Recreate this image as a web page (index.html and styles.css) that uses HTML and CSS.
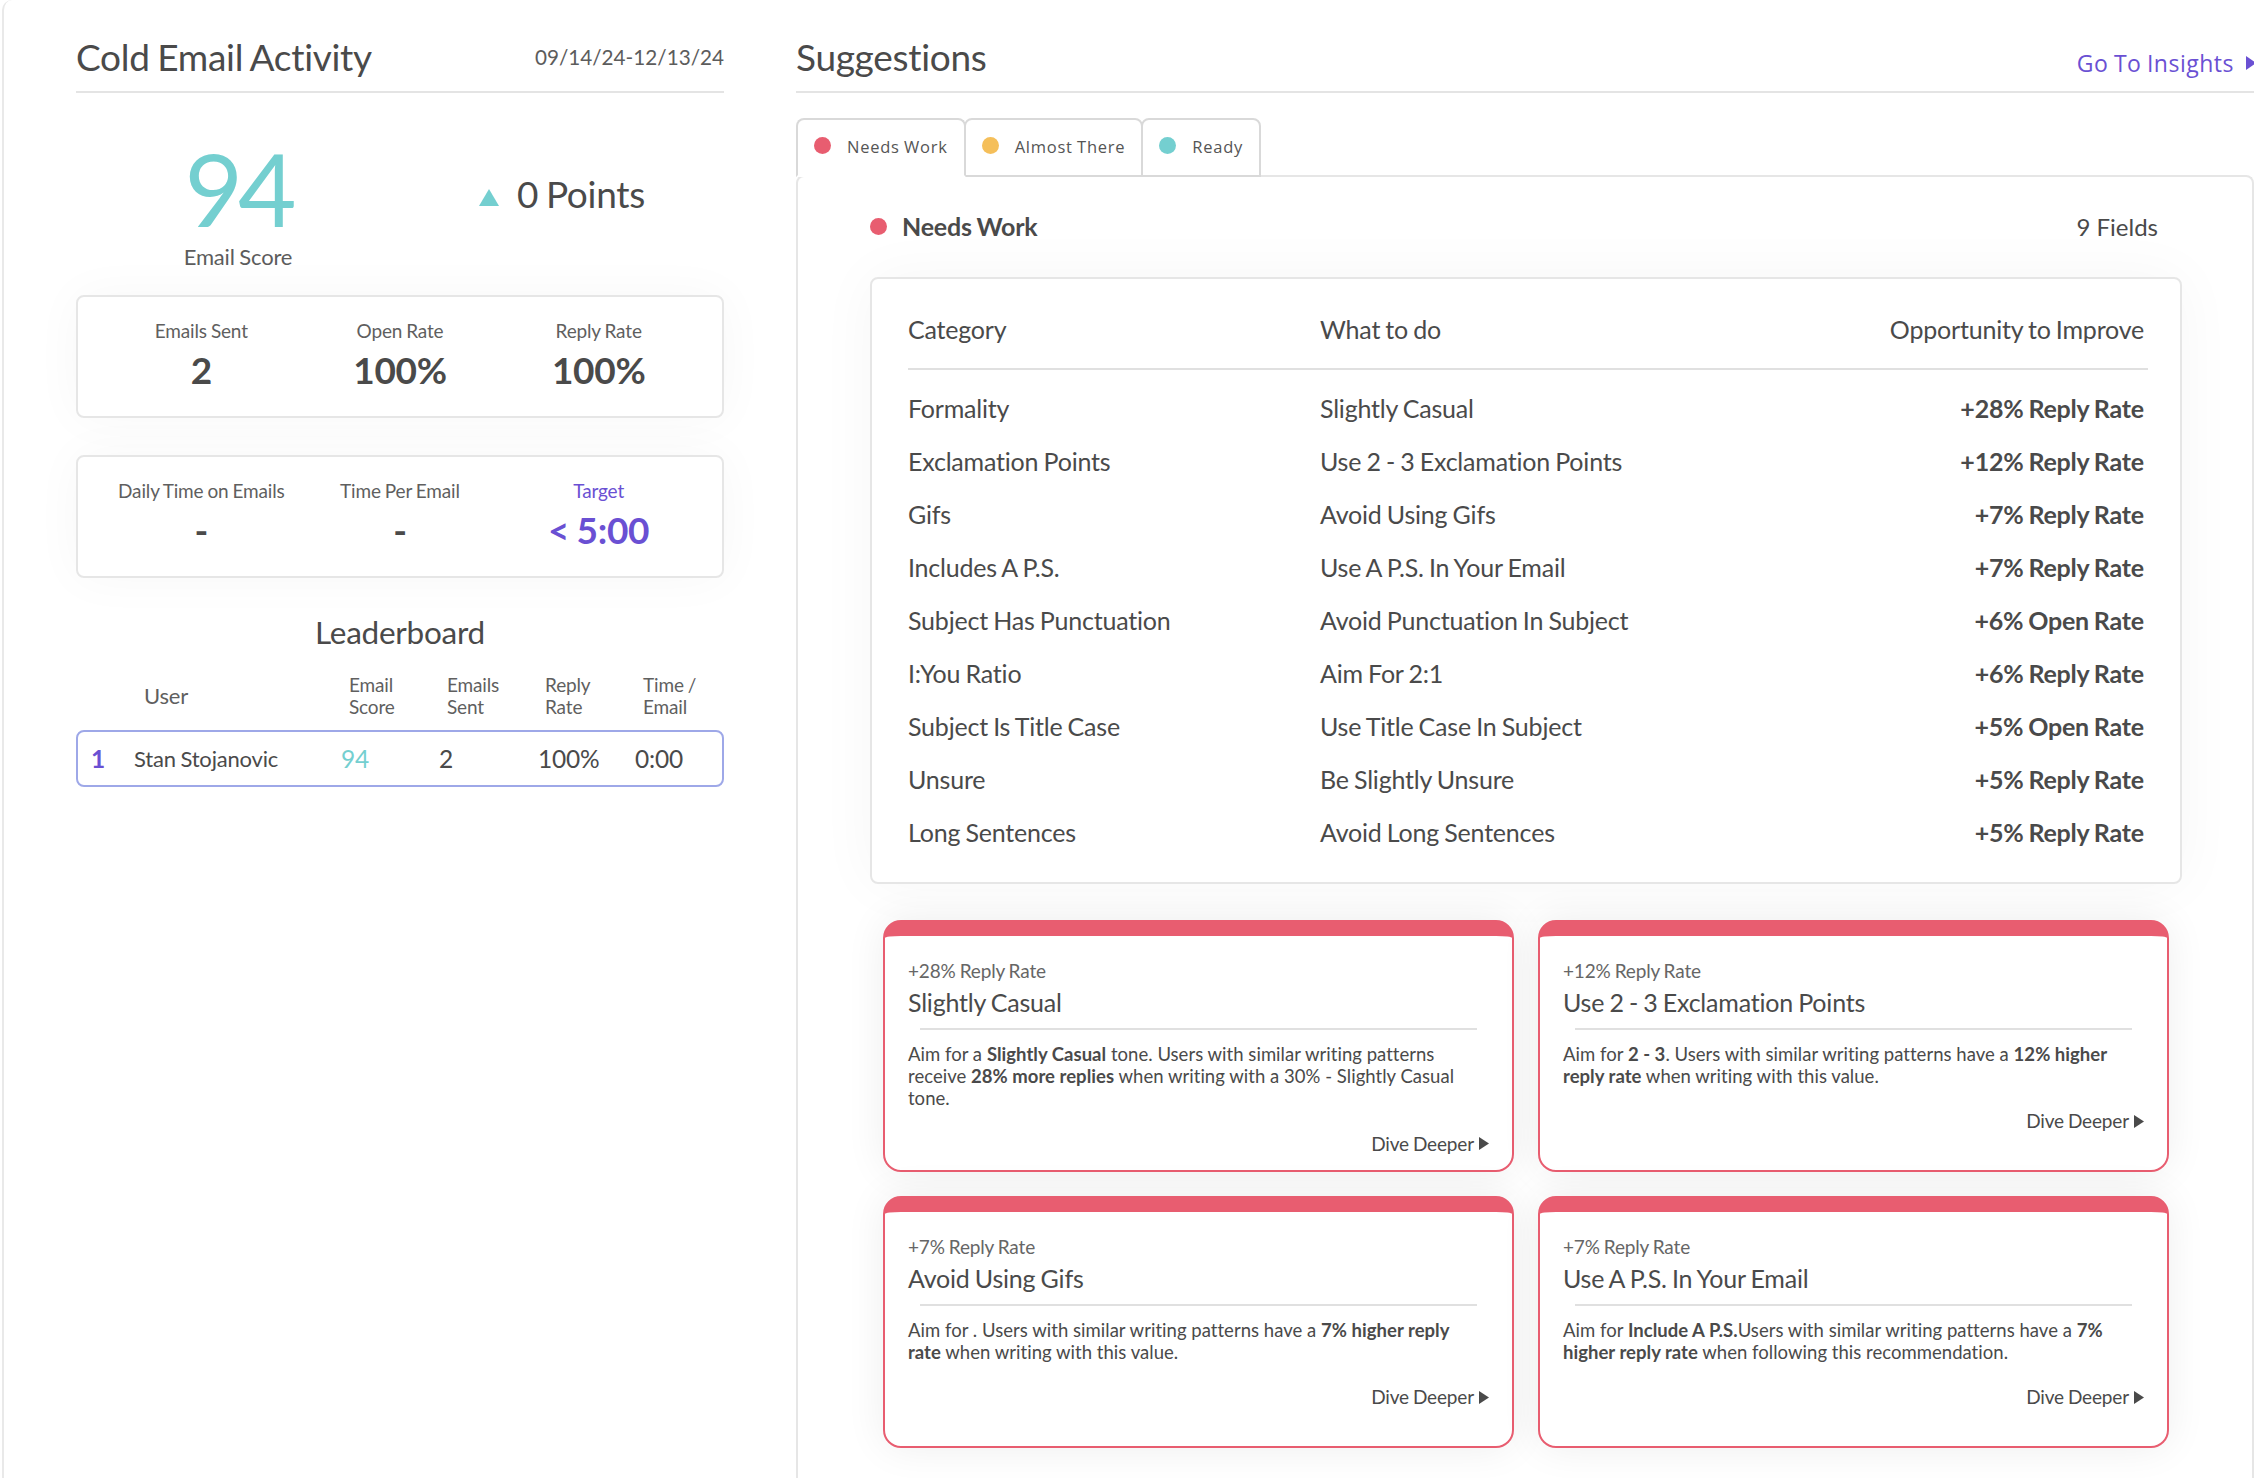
FILE: index.html
```html
<!DOCTYPE html>
<html lang="en">
<head>
  <meta charset="UTF-8">
  <meta name="viewport" content="width=device-width, initial-scale=1.0">
  <title>Cold Email Activity</title>
  <link rel="stylesheet" href="styles.css">
</head>
<body>
  <div class="page">
    <div class="left-col">
      <div class="col-header">
        <h2>Cold Email Activity</h2>
        <span class="date-range">09/14/24-12/13/24</span>
      </div>

      <div class="score-row">
        <div class="score-box">
          <div class="score-num">94</div>
          <div class="score-label">Email Score</div>
        </div>
        <div class="points-box">
          <svg class="points-arrow" width="20" height="17" viewBox="0 0 20 17"><path d="M10 0L20 17H0z"/></svg>
          <span>0 Points</span>
        </div>
      </div>

      <div class="stat-card">
        <div class="stat">
          <div class="stat-label">Emails Sent</div>
          <div class="stat-value">2</div>
        </div>
        <div class="stat">
          <div class="stat-label">Open Rate</div>
          <div class="stat-value">100%</div>
        </div>
        <div class="stat">
          <div class="stat-label">Reply Rate</div>
          <div class="stat-value">100%</div>
        </div>
      </div>

      <div class="stat-card">
        <div class="stat">
          <div class="stat-label">Daily Time on Emails</div>
          <div class="stat-value">-</div>
        </div>
        <div class="stat">
          <div class="stat-label">Time Per Email</div>
          <div class="stat-value">-</div>
        </div>
        <div class="stat target">
          <div class="stat-label">Target</div>
          <div class="stat-value">&lt; 5:00</div>
        </div>
      </div>

      <h3 class="board-title">Leaderboard</h3>
      <div class="board-head">
        <span class="board-user">User</span>
        <span>Email<br>Score</span>
        <span>Emails<br>Sent</span>
        <span>Reply<br>Rate</span>
        <span>Time /<br>Email</span>
      </div>
      <div class="board-row">
        <span class="board-rank">1</span>
        <span class="board-name">Stan Stojanovic</span>
        <span class="board-score">94</span>
        <span>2</span>
        <span>100%</span>
        <span>0:00</span>
      </div>
    </div>

    <div class="right-col">
      <div class="col-header">
        <h2>Suggestions</h2>
        <a class="insights-link" href="#">Go To Insights
          <svg width="10" height="14" viewBox="0 0 10 14"><path d="M0 0L10 7L0 14z"/></svg>
        </a>
      </div>

      <div class="tabs">
        <div class="tab active"><i class="dot red"></i>Needs Work</div>
        <div class="tab"><i class="dot yellow"></i>Almost There</div>
        <div class="tab"><i class="dot teal"></i>Ready</div>
      </div>

      <div class="panel">
        <div class="panel-head">
          <div class="panel-title"><i class="dot red"></i>Needs Work</div>
          <div class="panel-count">9 Fields</div>
        </div>

        <div class="table-card">
          <div class="table-head">
            <span>Category</span>
            <span>What to do</span>
            <span>Opportunity to Improve</span>
          </div>
          <div class="table-row"><span>Formality</span><span>Slightly Casual</span><b>+28% Reply Rate</b></div>
          <div class="table-row"><span>Exclamation Points</span><span>Use 2 - 3 Exclamation Points</span><b>+12% Reply Rate</b></div>
          <div class="table-row"><span>Gifs</span><span>Avoid Using Gifs</span><b>+7% Reply Rate</b></div>
          <div class="table-row"><span>Includes A P.S.</span><span>Use A P.S. In Your Email</span><b>+7% Reply Rate</b></div>
          <div class="table-row"><span>Subject Has Punctuation</span><span>Avoid Punctuation In Subject</span><b>+6% Open Rate</b></div>
          <div class="table-row"><span>I:You Ratio</span><span>Aim For 2:1</span><b>+6% Reply Rate</b></div>
          <div class="table-row"><span>Subject Is Title Case</span><span>Use Title Case In Subject</span><b>+5% Open Rate</b></div>
          <div class="table-row"><span>Unsure</span><span>Be Slightly Unsure</span><b>+5% Reply Rate</b></div>
          <div class="table-row"><span>Long Sentences</span><span>Avoid Long Sentences</span><b>+5% Reply Rate</b></div>
        </div>

        <div class="tip-grid">
          <div class="tip-card">
            <div class="tip-rate">+28% Reply Rate</div>
            <div class="tip-title">Slightly Casual</div>
            <p class="tip-text">Aim for a <b>Slightly Casual</b> tone. Users with similar writing patterns<br>receive <b>28% more replies</b> when writing with a 30% - Slightly Casual<br>tone.</p>
            <a class="dive-link" href="#">Dive Deeper <svg width="10" height="13" viewBox="0 0 10 13"><path d="M0 0L10 6.5L0 13z"/></svg></a>
          </div>
          <div class="tip-card">
            <div class="tip-rate">+12% Reply Rate</div>
            <div class="tip-title">Use 2 - 3 Exclamation Points</div>
            <p class="tip-text">Aim for <b>2 - 3</b>. Users with similar writing patterns have a <b>12% higher</b><br><b>reply rate</b> when writing with this value.</p>
            <a class="dive-link" href="#">Dive Deeper <svg width="10" height="13" viewBox="0 0 10 13"><path d="M0 0L10 6.5L0 13z"/></svg></a>
          </div>
          <div class="tip-card">
            <div class="tip-rate">+7% Reply Rate</div>
            <div class="tip-title">Avoid Using Gifs</div>
            <p class="tip-text">Aim for . Users with similar writing patterns have a <b>7% higher reply</b><br><b>rate</b> when writing with this value.</p>
            <a class="dive-link" href="#">Dive Deeper <svg width="10" height="13" viewBox="0 0 10 13"><path d="M0 0L10 6.5L0 13z"/></svg></a>
          </div>
          <div class="tip-card">
            <div class="tip-rate">+7% Reply Rate</div>
            <div class="tip-title">Use A P.S. In Your Email</div>
            <p class="tip-text">Aim for <b>Include A P.S.</b>Users with similar writing patterns have a <b>7%</b><br><b>higher reply rate</b> when following this recommendation.</p>
            <a class="dive-link" href="#">Dive Deeper <svg width="10" height="13" viewBox="0 0 10 13"><path d="M0 0L10 6.5L0 13z"/></svg></a>
          </div>
        </div>
      </div>
    </div>
  </div>
</body>
</html>
```

FILE: styles.css
```css
* {
  box-sizing: border-box;
  letter-spacing: -0.008em;
  word-spacing: -0.04em;
}
body {
  font-family: Lato, "Liberation Sans", sans-serif;
  color: #4a4a4a;
  background-color: #fff;
  margin: 0;
  height: 1478px;
  overflow: hidden;
}
a {
  text-decoration: none;
}
.page {
  display: flex;
  height: 1478px;
  margin-left: 2px;
  padding-left: 72px;
  border-left: 2px solid #e9e9e9;
  border-top-left-radius: 10px;
}
.left-col {
  width: 648px;
  flex-shrink: 0;
}
.right-col {
  width: 1458px;
  margin-left: 72px;
  flex-shrink: 0;
}
.col-header {
  display: flex;
  justify-content: space-between;
  align-items: center;
  height: 93px;
  padding-top: 36px;
  padding-bottom: 13px;
  border-bottom: 2px solid #e4e4e4;
}
.col-header h2 {
  font-size: 37px;
  font-weight: 400;
  line-height: 44px;
  margin: 0;
}
.date-range {
  font-size: 20.7px;
  letter-spacing: 0;
  color: #5c5c5c;
}

/* score */
.score-row {
  display: grid;
  grid-template-columns: 324px 324px;
  height: 202px;
}
.score-box {
  text-align: center;
  padding-top: 43px;
}
.score-num {
  font-size: 101px;
  font-weight: 400;
  line-height: 104px;
  letter-spacing: -0.05em;
  color: #74cfd0;
}
.score-label {
  font-size: 22px;
  line-height: 28px;
  margin-top: 3px;
  color: #5c5c5c;
}
.points-box {
  display: flex;
  justify-content: center;
  align-items: center;
  gap: 18px;
  height: 202px;
  padding-bottom: 2px;
  font-size: 37px;
}
.points-arrow {
  fill: #74cfd0;
  margin-top: 8px;
}

/* stat cards */
.stat-card {
  display: grid;
  grid-template-columns: repeat(3, 1fr);
  height: 123px;
  margin-bottom: 37px;
  padding: 22px 24px 0;
  background-color: #fff;
  border: 2px solid #e6e6e6;
  border-radius: 8px;
  box-shadow: 0 0 50px rgba(0, 0, 0, 0.035);
  text-align: center;
}
.stat-label {
  font-size: 19px;
  line-height: 24px;
  color: #5f5f5f;
}
.stat-value {
  font-size: 37px;
  font-weight: 700;
  line-height: 40px;
  margin-top: 7px;
}
.target .stat-label,
.target .stat-value {
  color: #6a50d3;
}

/* leaderboard */
.board-title {
  font-size: 31.5px;
  font-weight: 400;
  line-height: 40px;
  margin: -3px 0 0;
  text-align: center;
}
.board-head {
  display: grid;
  grid-template-columns: 205px 98px 98px 98px 98px;
  align-items: center;
  margin-top: 22px;
  padding-left: 68px;
  font-size: 19px;
  line-height: 22px;
  color: #5f5f5f;
}
.board-user {
  font-size: 22px;
}
.board-row {
  display: grid;
  grid-template-columns: 43px 207px 98px 99px 97px 80px;
  align-items: center;
  height: 57px;
  margin-top: 12px;
  padding-left: 13px;
  border: 2px solid #9ea8e8;
  border-radius: 8px;
  font-size: 24.5px;
}
.board-name {
  font-size: 22px;
}
.board-rank {
  color: #6a50d3;
  font-weight: 700;
}
.board-score {
  color: #74cfd0;
}

/* suggestions */
.insights-link {
  display: flex;
  align-items: center;
  gap: 12px;
  margin-top: 12px;
  margin-right: -2px;
  font-family: "Open Sans", sans-serif;
  font-size: 23px;
  letter-spacing: 0.5px;
  color: #6a50d3;
}
.insights-link svg {
  fill: #6a50d3;
}
.tabs {
  display: flex;
  margin-top: 25px;
  margin-bottom: -2px;
}
.tab {
  display: flex;
  align-items: flex-start;
  height: 59px;
  padding: 16px 16px 0 16px;
  background-color: #fff;
  border: 2px solid #d9d9d9;
  border-radius: 8px 8px 0 0;
  margin-right: -2px;
  font-family: "Open Sans", sans-serif;
  font-size: 16.5px;
  line-height: 22px;
  letter-spacing: 0.75px;
  color: #555;
}
.tab .dot {
  margin: 1px 16px 0 0;
}
.tab.active {
  position: relative;
  z-index: 1;
  border-bottom-color: #fff;
}
.dot {
  display: inline-block;
  width: 17px;
  height: 17px;
  border-radius: 50%;
  flex-shrink: 0;
}
.dot.red {
  background-color: #e85d70;
}
.dot.yellow {
  background-color: #f5bf5a;
}
.dot.teal {
  background-color: #74cfd0;
}
.panel {
  height: 1303px;
  padding: 34px 70px 0 72px;
  border: 2px solid #e6e6e6;
  border-bottom: 0;
  border-radius: 8px 8px 0 0;
}
.panel-head {
  display: flex;
  justify-content: space-between;
  align-items: center;
  height: 30px;
  padding-right: 24px;
}
.panel-title {
  display: flex;
  align-items: center;
  gap: 15px;
  font-size: 25px;
  font-weight: 700;
}
.panel-count {
  font-size: 24px;
  letter-spacing: 0;
  word-spacing: 0;
}
.table-card {
  height: 607px;
  margin-top: 36px;
  padding: 27px 36px 0;
  background-color: #fff;
  border: 2px solid #e6e6e6;
  border-radius: 8px;
  box-shadow: 0 0 60px rgba(0, 0, 0, 0.04);
  font-size: 25px;
}
.table-head,
.table-row {
  display: grid;
  grid-template-columns: 412px 1fr auto;
  align-items: center;
}
.table-head {
  height: 64px;
  padding-bottom: 16px;
  margin-right: -4px;
  padding-right: 4px;
  margin-bottom: 12px;
  border-bottom: 2px solid #e0e0e0;
}
.table-row {
  height: 53px;
  padding-bottom: 2px;
}
.tip-grid {
  display: grid;
  grid-template-columns: 631px 631px;
  column-gap: 24px;
  row-gap: 24px;
  margin-top: 36px;
  margin-left: 13px;
}
.tip-card {
  display: flex;
  flex-direction: column;
  min-height: 252px;
  padding: 23px 23px 13px 23px;
  background-color: #fff;
  border: 2px solid #e85d70;
  border-top-width: 16px;
  border-radius: 18px;
  box-shadow: 0 0 40px rgba(0, 0, 0, 0.07);
}
.tip-rate {
  font-size: 19px;
  line-height: 24px;
  color: #666;
}
.tip-title {
  font-size: 25px;
  line-height: 34px;
  margin-top: 2px;
  padding-bottom: 9px;
}
.tip-text {
  position: relative;
  margin: 0 0 22px;
  padding-top: 15px;
  font-size: 18.5px;
  line-height: 22.2px;
  letter-spacing: 0.03px;
  word-spacing: 0;
}
.tip-text b {
  letter-spacing: inherit;
  word-spacing: inherit;
}
.tip-text::before {
  content: "";
  position: absolute;
  top: 0;
  left: 12px;
  right: 12px;
  height: 2px;
  background-color: #e0e0e0;
}
.dive-link {
  display: flex;
  justify-content: flex-end;
  align-items: center;
  gap: 5px;
  font-size: 19px;
  line-height: 24px;
  color: #4a4a4a;
}
.dive-link svg {
  fill: #4a4a4a;
}
```
